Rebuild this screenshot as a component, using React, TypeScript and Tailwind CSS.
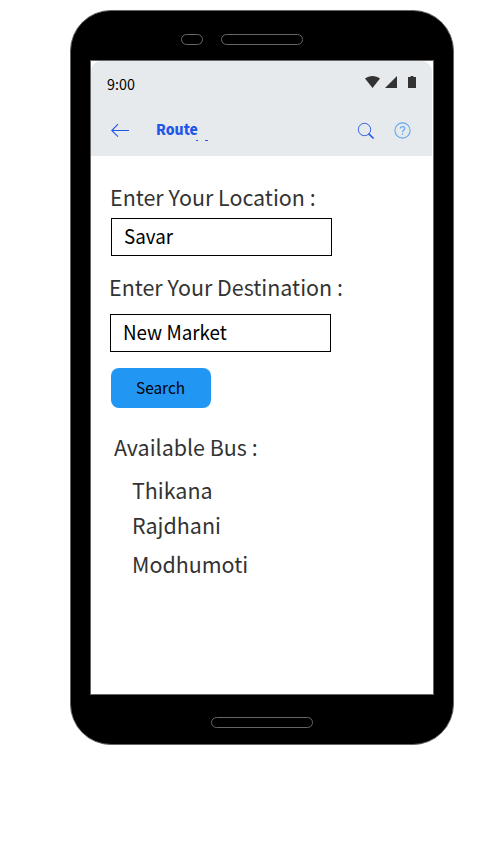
import React from "react";

function StatusIcons() {
  return (
    <svg className="mr-[15px] mt-[14px] block" width="52" height="14" viewBox="0 0 52 14" fill="#333333">
      <path d="M0 3.6C4.3 0.1 10.7 0.1 15 3.6L7.5 13z" />
      <path d="M32 1v12H20z" />
      <path d="M43 2h2.6V1h2.8v1H51v11h-8z" />
    </svg>
  );
}

function Header() {
  return (
    <header className="h-[95px] w-[341px] rounded-t-[10px] bg-[#e6eaed]">
      <div className="flex h-[46px] items-start justify-between">
        <span className="ml-4 mt-[11px] inline-block origin-left scale-x-[0.955] text-[15px] leading-6 text-black">9:00</span>
        <StatusIcons />
      </div>
      <div className="flex h-[49px] items-start">
        <svg className="ml-5 mt-4 block" width="19" height="14" viewBox="0 0 19 14" fill="none" stroke="#2357e8" strokeWidth="1.1">
          <path d="M18 7.5H0.8M7 1.2L0.8 7.5L7 13.6" />
        </svg>
        <div className="ml-[26px] mt-[11px] w-[60px]">
          <div className="h-[22px] origin-left scale-x-[0.975] text-[14.3px] font-black leading-[22px] text-[#2357e8]">Route</div>
          <div className="flex gap-[7px] pl-10">
            <span className="h-px w-[2px] bg-[#2357e8]" />
            <span className="h-px w-[3px] bg-[#2357e8]" />
          </div>
        </div>
        <svg className="ml-[141px] mt-[15px] block" width="18" height="18" viewBox="0 0 18 18" fill="none" stroke="#2357e8">
          <circle cx="7.5" cy="7.5" r="6.2" strokeWidth="0.9" />
          <path d="M11.5 11.6L16.6 16.5" strokeWidth="1.6" />
        </svg>
        <svg className="ml-[19px] mt-[15px] block" width="18" height="18" viewBox="0 0 18 18" fill="none" stroke="#64a8f0">
          <circle cx="8.5" cy="8.5" r="7.6" strokeWidth="1.1" />
          <path d="M6.4 6.6C6.4 3.8 10.7 3.9 10.7 6.5C10.7 8.2 8.5 8.3 8.5 10.3M8.5 11.4V12.8" strokeWidth="1.3" />
        </svg>
      </div>
    </header>
  );
}

export default function App() {
  return (
    <div className="h-[855px] w-[503px] bg-white pl-[70px] pt-[10px] font-['Noto_Sans_CJK_SC',sans-serif]">
      <div className="h-[735px] w-[384px] rounded-[41px] border border-[#666666] bg-black">
        <div className="flex h-[49px] gap-[18px] pl-[110px] pt-[23px]">
          <div className="h-[11px] w-[22px] rounded-full border border-[#666666]" />
          <div className="h-[11px] w-[82px] rounded-full border border-[#666666]" />
        </div>
        <main className="ml-[19px] h-[635px] w-[344px] border border-[#666666] bg-white">
          <Header />
          <div className="flex flex-col items-start whitespace-nowrap pt-6 text-[22px] leading-8 text-[#333333]">
            <label className="ml-[19px] origin-left scale-x-[0.975]">Enter Your Location :</label>
            <div className="ml-5 mt-[6px] h-[38px] w-[221px] border border-black pl-3 text-[20px] leading-[34px] text-black">
              <span className="inline-block origin-left scale-x-[0.94]">Savar</span>
            </div>
            <label className="ml-[18px] mt-[14px] origin-left scale-x-[0.975]">Enter Your Destination :</label>
            <div className="ml-[19px] mt-3 h-[38px] w-[221px] border border-black pl-3 text-[20px] leading-[34px] text-black">
              <span className="inline-block origin-left scale-x-[0.94]">New Market</span>
            </div>
            <button className="ml-5 mt-4 h-10 w-[100px] rounded-lg bg-[#2196f3] pb-[2px] text-center text-[16px] leading-[38px] text-black">
              <span className="inline-block scale-x-[0.96]">Search</span>
            </button>
            <h2 className="ml-[23px] mt-[22px] origin-left scale-x-[0.975]">Available Bus :</h2>
            <div className="ml-[41px] mt-[11px] origin-left scale-x-[0.975]">Thikana</div>
            <div className="ml-[41px] mt-[3px] origin-left scale-x-[0.975]">Rajdhani</div>
            <div className="ml-[41px] mt-[7px] origin-left scale-x-[0.975]">Modhumoti</div>
          </div>
        </main>
        <div className="ml-[140px] mt-[22px] h-[11px] w-[102px] rounded-full border border-[#666666]" />
      </div>
    </div>
  );
}
